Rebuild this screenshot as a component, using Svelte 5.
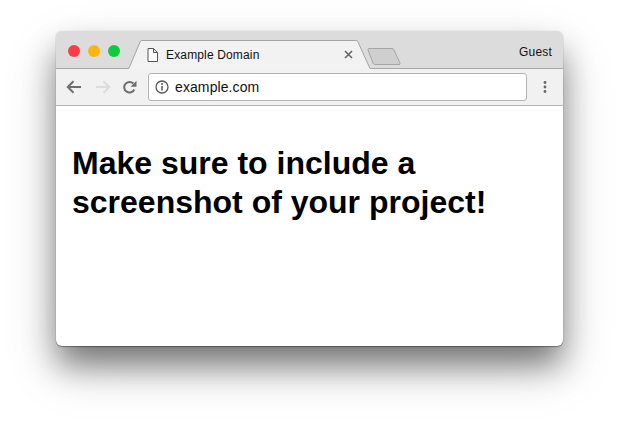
<script lang="ts">
	const lights = ['#fc3d44', '#fdb60f', '#0ccb3d'];
</script>

<div class="page">
	<div class="window">
		<header class="tabstrip">
			<div class="lights">
				{#each lights as color}
					<span class="light" style:background={color}></span>
				{/each}
			</div>
			<div class="tab">
				<svg class="tab-shape" width="243" height="29" viewBox="0 0 243 29">
					<path d="M0 28.5H1L12.5 1Q13 .5 14 .5H228Q229 .5 229.500 1L242 28.500H243V29H0Z" fill="#f2f2f2" />
					<path d="M0 28.500H.8L12.500 1Q13 .5 14 .5H228Q229 .5 229.500 1L242 28.500H243" fill="none" stroke="#a3a3a3" />
				</svg>
				<svg class="page-icon" width="11" height="14" viewBox="0 0 11 14">
					<path d="M1 .5H6.500L10.500 4.500V13.500H1ZM6.500 .5V4.500H10.500" fill="#fff" stroke="#555" />
				</svg>
				<span class="tab-title">Example Domain</span>
				<svg class="close" width="9" height="9" viewBox="0 0 9 9">
					<path d="M1 1L8 8M8 1L1 8" stroke="#666" stroke-width="1.600" />
				</svg>
			</div>
			<svg class="new-tab" width="34" height="17" viewBox="0 0 34 17">
				<path d="M1 2Q.5 .5 2 .5H25Q26.500 .5 27 2L33 15Q33.500 16.500 32 16.500H8Q6.500 16.500 6 15Z" fill="#cfcfcf" stroke="#a5a5a5" />
			</svg>
			<span class="guest">Guest</span>
		</header>

		<nav class="toolbar">
			<svg width="16" height="14" viewBox="0 0 16 14">
				<path d="M15 7H2M7.500 1.200L1.800 7L7.500 12.800" fill="none" stroke="#6e6e6e" stroke-width="2" />
			</svg>
			<svg class="forward" width="16" height="14" viewBox="0 0 16 14">
				<path d="M1 7H14M8.500 1.200L14.200 7L8.500 12.800" fill="none" stroke="#dcdcdc" stroke-width="2" />
			</svg>
			<svg class="reload" width="15" height="15" viewBox="0 0 15 15">
				<path d="M12.300 9.500A5.300 5.300 0 1 1 11.300 3.500" fill="none" stroke="#6e6e6e" stroke-width="2" />
				<path d="M14.500 .8V6.800H8.500Z" fill="#6e6e6e" />
			</svg>
			<div class="omnibox">
				<svg width="14" height="14" viewBox="0 0 14 14">
					<circle cx="7" cy="7" r="6" fill="none" stroke="#555" stroke-width="1.300" />
					<path d="M7 6V10.500" stroke="#555" stroke-width="1.500" />
					<circle cx="7" cy="4" r="1" fill="#555" />
				</svg>
				<span class="url">example.com</span>
			</div>
			<svg class="menu" width="4" height="14" viewBox="0 0 4 14">
				<circle cx="2" cy="2.500" r="1.400" fill="#666" />
				<circle cx="2" cy="7" r="1.400" fill="#666" />
				<circle cx="2" cy="11.500" r="1.400" fill="#666" />
			</svg>
		</nav>

		<main class="content">
			<h1>Make sure to include a screenshot of your project!</h1>
		</main>
	</div>
</div>

<style>
	:global(body) {
		background: #fff;
	}

	.page {
		width: 619px;
		height: 426px;
		padding: 31px 56px 0;
		box-sizing: border-box;
		overflow: hidden;
		font-family: 'Liberation Sans', Arial, sans-serif;
	}

	.window {
		width: 507px;
		height: 315px;
		border-radius: 6px;
		display: flex;
		flex-direction: column;
		overflow: hidden;
		background: #fff;
		box-shadow:
			0 0 1px rgba(0, 0, 0, 0.3),
			0 1px 1px rgba(0, 0, 0, 0.35),
			0 20px 32px -2px rgba(0, 0, 0, 0.48),
			0 22px 56px rgba(0, 0, 0, 0.16);
	}

	.tabstrip {
		height: 38px;
		flex: none;
		display: flex;
		align-items: flex-start;
		background: #dcdcdc;
		border-bottom: 1px solid #a8a8a8;
		box-sizing: border-box;
	}

	.lights {
		display: flex;
		gap: 8px;
		padding: 14px 0 0 12px;
		width: 60px;
		flex: none;
	}

	.light {
		width: 12px;
		height: 12px;
		border-radius: 50%;
		flex: none;
	}

	.tab {
		position: relative;
		width: 243px;
		height: 38px;
		margin-top: 9px;
		flex: none;
	}

	.tab-shape {
		position: absolute;
		left: 0;
		top: 0;
	}

	.page-icon {
		position: absolute;
		left: 19px;
		top: 8px;
	}

	.tab-title {
		position: absolute;
		left: 38px;
		top: 7px;
		font-size: 12px;
		line-height: 16px;
		letter-spacing: 0.15px;
		color: #111;
	}

	.close {
		position: absolute;
		left: 216px;
		top: 10px;
	}

	.new-tab {
		margin: 17px 0 0 -4px;
		flex: none;
	}

	.guest {
		margin-left: auto;
		padding: 14px 11px 0 0;
		font-size: 12px;
		line-height: 14px;
		letter-spacing: 0.2px;
		color: #111;
	}

	.toolbar {
		height: 37px;
		flex: none;
		display: flex;
		align-items: center;
		background: #f1f1f1;
		border-bottom: 1px solid #b5b5b5;
		box-sizing: border-box;
		padding-left: 10px;
	}

	.forward {
		margin-left: 13px;
	}

	.reload {
		margin-left: 11px;
	}

	.omnibox {
		display: flex;
		align-items: center;
		gap: 6px;
		width: 379px;
		height: 28px;
		margin-left: 11px;
		padding-left: 6px;
		box-sizing: border-box;
		background: #fff;
		border: 1px solid #b4b4b4;
		border-radius: 3px;
		flex: none;
	}

	.url {
		font-size: 14px;
		letter-spacing: 0.1px;
		color: #111;
	}

	.menu {
		margin-left: 16px;
	}

	.content {
		flex: 1;
		padding: 38px 16px 0;
	}

	h1 {
		margin: 0;
		font-size: 32px;
		line-height: 39px;
		font-weight: 700;
		color: #000;
	}
</style>
